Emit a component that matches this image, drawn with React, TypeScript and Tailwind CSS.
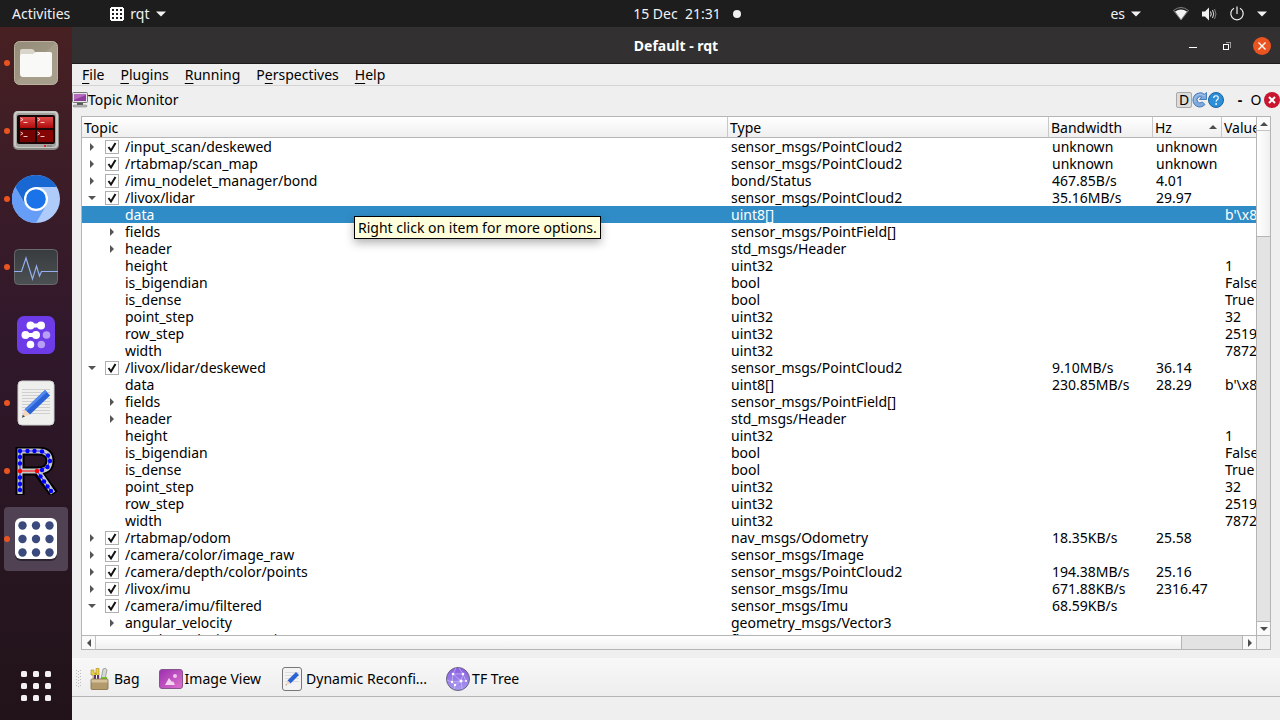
import { useState } from 'react';
import type { ReactNode } from 'react';

interface TopicRow {
  id: string;
  name: string;
  type: string;
  bandwidth?: string;
  hz?: string;
  value?: string;
  depth: 0 | 1;
  arrow?: 'open' | 'closed';
}

const POINT_CLOUD_FIELDS: Omit<TopicRow, 'id' | 'depth'>[] = [
  { name: 'fields', type: 'sensor_msgs/PointField[]', arrow: 'closed' },
  { name: 'header', type: 'std_msgs/Header', arrow: 'closed' },
  { name: 'height', type: 'uint32', value: '1' },
  { name: 'is_bigendian', type: 'bool', value: 'False' },
  { name: 'is_dense', type: 'bool', value: 'True' },
  { name: 'point_step', type: 'uint32', value: '32' },
  { name: 'row_step', type: 'uint32', value: '2519' },
  { name: 'width', type: 'uint32', value: '7872' },
];

const pointCloudRows = (topic: string): TopicRow[] =>
  POINT_CLOUD_FIELDS.map((f) => ({ ...f, id: `${topic}/${f.name}`, depth: 1 }));

const ROWS: TopicRow[] = [
  { id: 'scan', name: '/input_scan/deskewed', type: 'sensor_msgs/PointCloud2', bandwidth: 'unknown', hz: 'unknown', depth: 0, arrow: 'closed' },
  { id: 'map', name: '/rtabmap/scan_map', type: 'sensor_msgs/PointCloud2', bandwidth: 'unknown', hz: 'unknown', depth: 0, arrow: 'closed' },
  { id: 'bond', name: '/imu_nodelet_manager/bond', type: 'bond/Status', bandwidth: '467.85B/s', hz: '4.01', depth: 0, arrow: 'closed' },
  { id: 'lidar', name: '/livox/lidar', type: 'sensor_msgs/PointCloud2', bandwidth: '35.16MB/s', hz: '29.97', depth: 0, arrow: 'open' },
  { id: 'lidar/data', name: 'data', type: 'uint8[]', value: "b'\\x8", depth: 1 },
  ...pointCloudRows('lidar'),
  { id: 'deskewed', name: '/livox/lidar/deskewed', type: 'sensor_msgs/PointCloud2', bandwidth: '9.10MB/s', hz: '36.14', depth: 0, arrow: 'open' },
  { id: 'deskewed/data', name: 'data', type: 'uint8[]', bandwidth: '230.85MB/s', hz: '28.29', value: "b'\\x8", depth: 1 },
  ...pointCloudRows('deskewed'),
  { id: 'odom', name: '/rtabmap/odom', type: 'nav_msgs/Odometry', bandwidth: '18.35KB/s', hz: '25.58', depth: 0, arrow: 'closed' },
  { id: 'image', name: '/camera/color/image_raw', type: 'sensor_msgs/Image', depth: 0, arrow: 'closed' },
  { id: 'points', name: '/camera/depth/color/points', type: 'sensor_msgs/PointCloud2', bandwidth: '194.38MB/s', hz: '25.16', depth: 0, arrow: 'closed' },
  { id: 'imu', name: '/livox/imu', type: 'sensor_msgs/Imu', bandwidth: '671.88KB/s', hz: '2316.47', depth: 0, arrow: 'closed' },
  { id: 'filtered', name: '/camera/imu/filtered', type: 'sensor_msgs/Imu', bandwidth: '68.59KB/s', depth: 0, arrow: 'open' },
  { id: 'filtered/av', name: 'angular_velocity', type: 'geometry_msgs/Vector3', depth: 1, arrow: 'closed' },
  { id: 'filtered/avc', name: 'angular_velocity_covariance', type: 'float64[9]', value: '(0.0', depth: 1 },
];

function Triangle({ dir }: { dir: 'up' | 'down' | 'left' | 'right' }) {
  const d = {
    up: 'M0 6 L4 2 L8 6Z',
    down: 'M0 2 L8 2 L4 6Z',
    left: 'M6 0 L6 8 L2 4Z',
    right: 'M2 0 L6 4 L2 8Z',
  }[dir];
  return (
    <svg viewBox="0 0 8 8" className="size-2 shrink-0" fill="currentColor" aria-hidden="true">
      <path d={d} />
    </svg>
  );
}

function Caret() {
  return (
    <svg viewBox="0 0 10 6" className="w-[10px] h-[6px] shrink-0" fill="currentColor" aria-hidden="true">
      <path d="M0 0.5 H10 L5 5.5Z" />
    </svg>
  );
}

function FilesIcon() {
  return (
    <svg viewBox="0 0 48 48" className="size-12">
      <defs>
        <linearGradient id="files-bg" x1="0" y1="0" x2="1" y2="1">
          <stop offset="0" stopColor="#948b79" />
          <stop offset="0.48" stopColor="#9d9581" />
          <stop offset="0.5" stopColor="#a69e8b" />
          <stop offset="1" stopColor="#a69f8c" />
        </linearGradient>
      </defs>
      <rect x="2.500" y="2.500" width="43" height="43" rx="5" fill="url(#files-bg)" stroke="#bab29f" />
      <path d="M8 12 q0 -2 2 -2 h10 q2 0 3 3 h15 q2 0 2 2 v6 h-32z" fill="#d9d5ca" />
      <path d="M8 17 q0 -2 2 -2 h11 q2 -2 4 -2 h13 q2 0 2 2 v20 q0 3 -3 3 h-26 q-3 0 -3 -3z" fill="#f9f9f8" />
    </svg>
  );
}

function TerminatorIcon() {
  return (
    <svg viewBox="0 0 48 48" className="size-12">
      <defs>
        <linearGradient id="pane-bg" x1="0" y1="0" x2="0" y2="1">
          <stop offset="0" stopColor="#e14a4a" />
          <stop offset="1" stopColor="#ae0b0b" />
        </linearGradient>
      </defs>
      <rect x="1" y="4" width="46" height="39" rx="5" fill="#8b8b86" />
      <rect x="2" y="4" width="44" height="37" rx="4" fill="#c9c9c5" />
      <rect x="4" y="6" width="40" height="34" rx="3" fill="#a3a39f" />
      <rect x="5" y="8" width="38" height="29" rx="2" fill="#190606" />
      <rect x="8" y="10" width="15" height="11" fill="url(#pane-bg)" />
      <rect x="25" y="10" width="16" height="11" fill="url(#pane-bg)" />
      <rect x="8" y="23" width="15" height="12" fill="#730303" />
      <rect x="25" y="23" width="16" height="12" fill="#850404" />
      <g fill="none" stroke="#ffd9d9" strokeWidth="0.900">
        <path d="M8.500 11 l2.500 1.500 l-2.500 1.500 M11.500 15.500 h4" />
        <path d="M25.500 11 l2.500 1.500 l-2.500 1.500 M28.500 15.500 h4" />
        <path d="M8.500 25 l2.500 1.500 l-2.500 1.500 M11.500 29.500 h4" />
        <path d="M25.500 25 l2.500 1.500 l-2.500 1.500 M28.500 29.500 h4" />
      </g>
      <circle cx="33" cy="39" r="1.100" fill="#f20d0d" />
      <rect x="35" y="38" width="5" height="2" fill="#8a8a8a" />
    </svg>
  );
}

function ChromiumIcon() {
  return (
    <svg viewBox="0 0 48 48" className="size-12">
      <circle cx="24" cy="24" r="24" fill="#aecbfa" />
      <path d="M24 0 A24 24 0 0 1 44.800 12 H24 L13.600 30 L3.200 12 A24 24 0 0 1 24 0Z" fill="#1967d2" />
      <path d="M3.200 12 A24 24 0 0 0 24 48 L34.400 30 L24 36 L13.600 30Z" fill="#669df6" />
      <circle cx="24" cy="24" r="12" fill="#fff" />
      <circle cx="24" cy="24" r="9.800" fill="#1a73e8" />
    </svg>
  );
}

function MonitorIcon() {
  return (
    <svg viewBox="0 0 48 48" className="size-12">
      <defs>
        <linearGradient id="monitor-bg" x1="0" y1="0" x2="0" y2="1">
          <stop offset="0" stopColor="#393c3e" />
          <stop offset="1" stopColor="#4b5052" />
        </linearGradient>
      </defs>
      <rect x="2.500" y="6.500" width="43" height="35" rx="4" fill="url(#monitor-bg)" stroke="#68696a" />
      <path d="M2 28.500 H9.500 L14 15 L20.500 36 L24.500 23 L27.500 33 L29.500 28.500 H46" fill="none" stroke="#94aef0" strokeWidth="1.200" />
    </svg>
  );
}

function ExtensionIcon() {
  return (
    <svg viewBox="0 0 48 48" className="size-12">
      <rect x="5" y="5" width="38" height="38" rx="7" fill="#6d3be8" />
      <g fill="#fff">
        <circle cx="18.500" cy="14.500" r="4" />
        <circle cx="29" cy="14.500" r="4" />
        <rect x="19" y="12.500" width="10" height="4" />
        <circle cx="13.500" cy="24" r="4" />
        <circle cx="24" cy="24" r="4" />
        <rect x="14" y="22" width="10" height="4" />
        <circle cx="18.500" cy="33.500" r="3.800" />
      </g>
      <g fill="#b79ff5">
        <circle cx="34.500" cy="24" r="3.800" />
        <circle cx="29.300" cy="33.500" r="3.800" />
      </g>
    </svg>
  );
}

function EditorIcon() {
  return (
    <svg viewBox="0 0 48 48" className="size-12">
      <rect x="6" y="2" width="36" height="44" rx="4" fill="#efefee" stroke="#d0d0d0" />
      <path d="M10 10.500 H38 M10 13.500 H38 M10 16.500 H38 M10 19.500 H38 M10 22.500 H38 M10 25.500 H38 M10 28.500 H38 M10 31.500 H38 M10 34.500 H38" stroke="#cfcfcf" />
      <path d="M33 11 L38 16.500 L18 35.500 L12.500 30.500Z" fill="#2b62d6" />
      <path d="M33 11 L35 13 L14.500 32 L12.500 30.500Z" fill="#5189ee" />
      <path d="M12.500 30.500 L18 35.500 L10 38.500Z" fill="#f3d6bd" />
      <path d="M10.700 35.800 L13 37.500 L10 38.800Z" fill="#444" />
    </svg>
  );
}

function RtabmapIcon() {
  const dots = [
    [8, 4], [15.500, 4], [22.500, 4], [30, 4.500], [36, 8.500], [38, 14], [35.500, 20], [30, 23],
    [8, 10], [8, 16.500], [8, 30.500], [8, 37], [8, 43], [28.500, 29.500], [32, 34.500], [35.500, 39.500], [39, 44],
  ];
  return (
    <svg viewBox="0 0 48 48" className="size-12">
      <path d="M8 48 V4 H26 Q38 4 38 14 Q38 24 25 24 H8 M25 24 L42 47" fill="none" stroke="#000" strokeWidth="9" />
      <path d="M8 47 V4 H26 Q38 4 38 14 Q38 24 25 24 H8 M26 24 L41 46" fill="none" stroke="#c6c6c6" strokeWidth="5" />
      <path d="M8 43 V4 H30 L36 9 L38 14 L35 20 L25 24 L39 44" fill="none" stroke="#00f" strokeWidth="0.800" />
      {dots.map(([x, y]) => (
        <circle key={`${x}-${y}`} cx={x} cy={y} r="2.200" fill="#00f" />
      ))}
      <path d="M8 24 H25" stroke="#f00" />
      <circle cx="8" cy="24" r="2.200" fill="#f00" />
      <circle cx="25" cy="24" r="2.200" fill="#f00" />
    </svg>
  );
}

function RqtIcon() {
  const steps = [10.500, 24, 37.500];
  return (
    <svg viewBox="0 0 48 48" className="size-12">
      <rect x="3" y="4" width="42" height="42" rx="6" fill="#2d2530" />
      <rect x="3" y="3" width="42" height="41" rx="6" fill="#fff" />
      {steps.map((y) => steps.map((x) => <circle key={`${x}-${y}`} cx={x} cy={y} r="4.200" fill="#3b4a7c" />))}
    </svg>
  );
}

function RqtGlyph() {
  return (
    <svg viewBox="0 0 14 14" className="size-[14px]" shapeRendering="crispEdges">
      <path d="M1 0 H13 V1 H14 V13 H13 V14 H1 V13 H0 V1 H1Z" fill="#fff" />
      {[2, 6, 10].map((y) => [2, 6, 10].map((x) => <rect key={`${x}-${y}`} x={x} y={y} width="2" height="2" fill="#1d1d1d" />))}
    </svg>
  );
}

function AppsIcon() {
  const steps = [9, 21, 33];
  return (
    <svg viewBox="0 0 48 48" className="size-12">
      {steps.map((y) => steps.map((x) => <rect key={`${x}-${y}`} x={x} y={y} width="6" height="6" rx="1.500" fill="#f2f0f0" />))}
    </svg>
  );
}

const DOCK: { label: string; running: boolean; active?: boolean; icon: ReactNode }[] = [
  { label: 'Files', running: true, icon: <FilesIcon /> },
  { label: 'Terminator', running: true, icon: <TerminatorIcon /> },
  { label: 'Chromium', running: true, icon: <ChromiumIcon /> },
  { label: 'System Monitor', running: true, icon: <MonitorIcon /> },
  { label: 'Extensions', running: false, icon: <ExtensionIcon /> },
  { label: 'Text Editor', running: true, icon: <EditorIcon /> },
  { label: 'RTAB-Map', running: true, icon: <RtabmapIcon /> },
  { label: 'rqt', running: true, active: true, icon: <RqtIcon /> },
];

function TopBar() {
  return (
    <header className="h-[27px] shrink-0 bg-[#1d1d1d] text-[#f2f2f2] grid grid-cols-[1fr_auto_1fr] items-center px-3">
      <div className="flex items-center gap-10">
        <button>Activities</button>
        <button className="flex items-center gap-[6px]">
          <RqtGlyph />
          <span>rqt</span>
          <Caret />
        </button>
      </div>
      <div className="flex items-center gap-3 pl-[94px]">
        <button className="whitespace-pre">15 Dec  21:31</button>
        <span className="size-2 rounded-full bg-[#f2f2f2]" />
      </div>
      <div className="flex items-center justify-end">
        <button className="flex items-center gap-[6px] mr-8">
          <span>es</span>
          <Caret />
        </button>
        <button className="flex items-center gap-3 pr-px" aria-label="System menu">
          <svg viewBox="0 0 16 16" className="size-4">
            <path d="M0.500 4.500 Q8 -1.500 15.500 4.500 L8 14Z" fill="none" stroke="#999" strokeWidth="0.800" />
            <path d="M2 5.500 Q8 1.500 14 5.500 L8 13.500Z" fill="#f2f2f2" />
          </svg>
          <svg viewBox="0 0 16 16" className="size-4" fill="none" stroke="#f2f2f2">
            <path d="M1 5.500 H4 L8 1.500 V14.500 L4 10.500 H1Z" fill="#f2f2f2" stroke="none" />
            <path d="M9.500 5.500 Q11 8 9.500 10.500" />
            <path d="M11.500 4 Q14 8 11.500 12" strokeWidth="0.900" />
            <path d="M13.500 3 Q16.500 8 13.500 13" stroke="#999" strokeWidth="0.800" />
          </svg>
          <svg viewBox="0 0 16 16" className="size-4" fill="none" stroke="#f2f2f2" strokeWidth="1.200">
            <path d="M5 2.200 A6.200 6.200 0 1 0 11 2.200 M8 0.500 V8" />
          </svg>
          <Caret />
        </button>
      </div>
    </header>
  );
}

function Dock() {
  return (
    <nav className="w-18 shrink-0 flex flex-col gap-1 px-1 pt-1 pb-[2px] bg-linear-to-b from-[#472022] via-[#30182b] via-45% to-[#211319]">
      {DOCK.map((app) => (
        <button
          key={app.label}
          aria-label={app.label}
          className={`relative size-16 shrink-0 flex items-center justify-center rounded ${app.active ? 'bg-[#504252]' : ''}`}
        >
          {app.running && <span className="absolute left-0 top-[29px] size-[6px] rounded-full bg-[#e95420]" />}
          {app.icon}
        </button>
      ))}
      <button aria-label="Show applications" className="size-16 mt-auto flex items-center justify-center">
        <AppsIcon />
      </button>
    </nav>
  );
}

function TitleBar() {
  return (
    <div className="h-[37px] shrink-0 bg-[#333031] border-b border-[#1c1a1a] text-white grid grid-cols-[1fr_auto_1fr] items-center px-[9px] pt-px">
      <span />
      <h1 className="font-bold">Default - rqt</h1>
      <div className="flex items-center justify-end gap-[18px]">
        <button aria-label="Minimize" className="size-4 flex items-center justify-center">
          <span className="w-2 h-px bg-white mt-1" />
        </button>
        <button aria-label="Restore" className="size-4 flex items-center justify-center">
          <svg viewBox="0 0 8 8" className="size-2" fill="none" shapeRendering="crispEdges">
            <path d="M2.500 0.500 H7.500 V5.500" stroke="#999" />
            <rect x="0.500" y="2.500" width="5" height="5" stroke="#fff" />
          </svg>
        </button>
        <button aria-label="Close" className="size-[18px] rounded-full bg-[#e95420] flex items-center justify-center">
          <svg viewBox="0 0 8 8" className="size-2" stroke="#fff" strokeWidth="1.400">
            <path d="M0.500 0.500 L7.500 7.500 M7.500 0.500 L0.500 7.500" />
          </svg>
        </button>
      </div>
    </div>
  );
}

function MenuItem({ label, hot = 0 }: { label: string; hot?: number }) {
  return (
    <button>
      {label.slice(0, hot)}
      <span className="underline underline-offset-3 decoration-1">{label[hot]}</span>
      {label.slice(hot + 1)}
    </button>
  );
}

function MenuBar() {
  return (
    <div className="h-[22px] shrink-0 flex items-center gap-4 px-[10px] border-b border-[#d4d4d4]">
      <MenuItem label="File" />
      <MenuItem label="Plugins" />
      <MenuItem label="Running" />
      <MenuItem label="Perspectives" hot={1} />
      <MenuItem label="Help" />
    </div>
  );
}

function PluginHeader() {
  return (
    <div className="h-[27px] shrink-0 flex items-center">
      <svg viewBox="0 0 16 16" className="size-4">
        <rect x="0.500" y="0.500" width="15" height="10" rx="1" fill="#e5e5e5" stroke="#777" />
        <rect x="2" y="2" width="12" height="7" fill="#8f3d9c" />
        <path d="M2 2 H14 V3 L2 8Z" fill="#b56abf" />
        <rect x="5" y="11" width="6" height="2" fill="#555" />
        <rect x="1" y="13" width="14" height="2" rx="1" fill="#bbb" stroke="#777" strokeWidth="0.500" />
      </svg>
      <h2>Topic Monitor</h2>
      <div className="ml-auto flex items-center">
        <button className="size-4 flex items-center justify-center rounded-xs border border-[#a8a8a8] bg-[#dcdcdc]">D</button>
        <button aria-label="Reload" className="size-4">
          <svg viewBox="0 0 16 16" className="size-4">
            <path
              d="M8 0.800 Q10.500 0.600 12.300 2.300 L14.500 0.500 V7.500 H7.500 L9.700 5 Q7.500 4 5.800 5.700 Q4.300 7.600 5.600 9.700 Q7.500 12 10.500 10 L13 12.500 Q10.500 15.500 7 15 Q1.200 13.800 0.900 8 Q1.200 1.800 8 0.800Z"
              fill="#7ea9dc"
              stroke="#4a7dbb"
            />
            <path d="M3 10 Q1.500 4 7.500 2.300 Q10 2 12 4 L13.300 3" fill="none" stroke="#aac8ea" />
          </svg>
        </button>
        <button aria-label="Help" className="size-4">
          <svg viewBox="0 0 16 16" className="size-4">
            <circle cx="8" cy="8" r="7.500" fill="#2d8fd8" stroke="#1c6399" />
            <path d="M5.700 6 Q5.700 3.800 8 3.800 Q10.300 3.800 10.300 6 Q10.300 7.200 8.900 8 Q8.100 8.500 8.100 9.800" fill="none" stroke="#fff" strokeWidth="1.100" />
            <circle cx="8.100" cy="12" r="0.900" fill="#fff" />
          </svg>
        </button>
        <button aria-label="Minimize plugin" className="w-4 ml-2 font-bold">-</button>
        <button aria-label="Float plugin" className="w-4">O</button>
        <button aria-label="Close plugin" className="size-4 rounded-full bg-[#c9162f] flex items-center justify-center">
          <svg viewBox="0 0 8 8" className="size-2" stroke="#fff" strokeWidth="2">
            <path d="M1 1 L7 7 M7 1 L1 7" />
          </svg>
        </button>
      </div>
    </div>
  );
}

function TopicTable() {
  const [selected, setSelected] = useState('lidar/data');
  const headCell = 'font-normal text-left pl-[2px] border-b border-[#b5b5b5]';

  return (
    <div className="relative flex-1 min-w-0 overflow-hidden bg-white">
      <table className="w-full table-fixed border-separate border-spacing-0 leading-[17px] whitespace-nowrap">
        <colgroup>
          <col />
          <col className="w-[321px]" />
          <col className="w-[104px]" />
          <col className="w-[69px]" />
          <col className="w-[34px]" />
        </colgroup>
        <thead>
          <tr className="h-[21px] bg-linear-to-b from-white to-[#eeeeee]">
            <th className={`${headCell} border-r border-r-[#c8c8c8]`}>Topic</th>
            <th className={`${headCell} border-r border-r-[#c8c8c8]`}>Type</th>
            <th className={`${headCell} border-r border-r-[#c8c8c8]`}>Bandwidth</th>
            <th className={`${headCell} border-r border-r-[#c8c8c8]`} aria-sort="ascending">
              <div className="flex items-center justify-between pr-1 text-[#4d4d4d]">
                <span className="text-black">Hz</span>
                <Triangle dir="up" />
              </div>
            </th>
            <th className={`${headCell} overflow-hidden`}>Value</th>
          </tr>
        </thead>
        <tbody>
          {ROWS.map((row) => (
            <tr
              key={row.id}
              onClick={() => setSelected(row.id)}
              className={`h-[17px] ${selected === row.id ? 'bg-[#308cc6] text-white' : ''}`}
            >
              <td className="p-0">
                <div className={`h-[17px] flex items-center ${row.depth ? 'pl-[26px]' : 'pl-[6px]'}`}>
                  <span className="size-2 mr-[9px] text-[#555] flex items-center">
                    {row.arrow && (
                      <button aria-label={`Toggle ${row.name}`} className="flex">
                        <Triangle dir={row.arrow === 'open' ? 'down' : 'right'} />
                      </button>
                    )}
                  </span>
                  {row.depth === 0 && (
                    <span className="relative size-[14px] mr-[6px]">
                      <input
                        id={row.id}
                        type="checkbox"
                        defaultChecked
                        className="peer block size-[14px] appearance-none border border-[#b0b0b0] bg-white"
                      />
                      <svg
                        viewBox="0 0 14 14"
                        className="absolute inset-0 size-[14px] pointer-events-none hidden peer-checked:block"
                        fill="none"
                        stroke="#111"
                        strokeWidth="2"
                      >
                        <path d="M3.500 7 L6 10.500 L10.500 3" />
                      </svg>
                    </span>
                  )}
                  {row.depth === 0 ? <label htmlFor={row.id}>{row.name}</label> : <span>{row.name}</span>}
                </div>
              </td>
              <td className="p-0 pl-[3px]">{row.type}</td>
              <td className="p-0 pl-[3px]">{row.bandwidth}</td>
              <td className="p-0 pl-[3px]">{row.hz}</td>
              <td className="p-0 pl-[3px] overflow-hidden">{row.value}</td>
            </tr>
          ))}
        </tbody>
      </table>
      <div
        role="tooltip"
        className="absolute left-[272px] top-[99px] border border-black bg-[#ffffdc] px-[3px] py-[2px] leading-[17px] whitespace-nowrap shadow-[0_4px_10px_rgba(0,0,0,0.3)]"
      >
        Right click on item for more options.
      </div>
    </div>
  );
}

function VerticalScrollbar() {
  const btn = 'h-[14px] shrink-0 flex items-center justify-center bg-[#fafafa]';
  return (
    <div className="w-[14px] shrink-0 flex flex-col border-l border-[#b5b5b5] bg-[#e3e3e3] text-[#4d4d4d]">
      <button aria-label="Scroll up" className={`${btn} border-b border-[#c4c4c4]`}>
        <Triangle dir="up" />
      </button>
      <div className="h-[20.400%] bg-linear-to-r from-white to-[#f0f0f0] border-b border-[#b5b5b5]" />
      <button aria-label="Scroll down" className={`${btn} mt-auto border-t border-[#b5b5b5]`}>
        <Triangle dir="down" />
      </button>
    </div>
  );
}

function HorizontalScrollbar() {
  const btn = 'w-[14px] shrink-0 flex items-center justify-center bg-[#fafafa]';
  return (
    <div className="h-[14px] shrink-0 flex border-t border-[#b5b5b5] bg-[#e3e3e3] text-[#4d4d4d]">
      <button aria-label="Scroll left" className={`${btn} border-r border-[#c4c4c4]`}>
        <Triangle dir="left" />
      </button>
      <div className="w-[91.400%] bg-linear-to-b from-white to-[#f0f0f0] border-r border-[#b5b5b5]" />
      <button aria-label="Scroll right" className={`${btn} ml-auto border-l border-[#b5b5b5]`}>
        <Triangle dir="right" />
      </button>
      <div className="w-[14px] shrink-0 border-l border-[#b5b5b5] bg-[#efefef]" />
    </div>
  );
}

function BagIcon() {
  return (
    <svg viewBox="0 0 24 24" className="size-6">
      <path d="M3 3 h3 v3 h2 v6 h-3 v-4 h-2z M8 1.500 h3 v10 h-3z" fill="#ecd04a" stroke="#a88a16" strokeWidth="0.600" />
      <path d="M15 2 q3 -2 4 1 l-2 9 h-4z" fill="#d5d8d5" stroke="#858985" strokeWidth="0.700" />
      <path d="M6 8 h5 v4 h-5z" fill="#5c3566" />
      <path d="M8 8 h1 v4 h-1z" fill="#fff" />
      <path d="M13 10 h6 v2 h-6z" fill="#73c32b" />
      <rect x="3" y="12" width="17" height="10.500" rx="1" fill="#b39a6c" stroke="#826c43" strokeWidth="0.800" />
      <rect x="3.500" y="12.500" width="16" height="3" fill="#d5c19a" />
    </svg>
  );
}

function ImageIcon() {
  return (
    <svg viewBox="0 0 24 24" className="size-6">
      <defs>
        <linearGradient id="picture-bg" x1="0" y1="0" x2="1" y2="1">
          <stop offset="0" stopColor="#9c2fb0" />
          <stop offset="1" stopColor="#df72cc" />
        </linearGradient>
      </defs>
      <rect x="0.500" y="2.500" width="23" height="19" rx="2.500" fill="url(#picture-bg)" stroke="#85548b" />
      <path d="M6 18 L10 11 L13 15 L14 14 L16 18Z" fill="#f3d2f2" />
      <circle cx="16" cy="9" r="2" fill="#f0c4ee" />
    </svg>
  );
}

function NoteIcon() {
  return (
    <svg viewBox="0 0 24 24" className="size-6">
      <rect x="2.500" y="0.500" width="19" height="23" rx="2.500" fill="#f3f3f3" stroke="#777" />
      <path d="M5 5.500 H19 M5 8.500 H19 M5 11.500 H19 M5 14.500 H19" stroke="#dcdcdc" />
      <path d="M16 5 L19 8 L10.500 16.500 L7.500 13.500Z" fill="#2b62d6" />
      <path d="M7.500 13.500 L10.500 16.500 L6 18Z" fill="#f3d6bd" />
      <path d="M5 18 L6.500 17 L7 18.500Z" fill="#b98b65" />
    </svg>
  );
}

function TreeIcon() {
  return (
    <svg viewBox="0 0 24 24" className="size-6">
      <defs>
        <linearGradient id="tree-bg" x1="0" y1="0" x2="0" y2="1">
          <stop offset="0" stopColor="#8a5be0" />
          <stop offset="1" stopColor="#a79af0" />
        </linearGradient>
      </defs>
      <circle cx="12" cy="12" r="11.500" fill="url(#tree-bg)" stroke="#6b6580" />
      <path d="M7 7 L17 7 L20 14 L15 14 L7 7 L6 15 L9 18 L15 14 L17 7 M6 15 L15 14 L16 22 M9 18 L8 22 M7 7 L10 1 M17 7 L13 1 M6 15 L1 13" fill="none" stroke="#c9bdf5" strokeWidth="0.700" />
      <g fill="#fff">
        <circle cx="7" cy="7" r="1.300" />
        <circle cx="17" cy="7" r="1.300" />
        <circle cx="15" cy="14" r="1.500" />
        <circle cx="6" cy="15" r="1.200" />
        <circle cx="9" cy="18" r="1.200" />
        <circle cx="20" cy="14" r="1" />
      </g>
    </svg>
  );
}

function PluginToolbar() {
  return (
    <div className="h-[39px] shrink-0 flex items-center pl-1 pt-1 bg-linear-to-b from-[#f8f8f8] to-[#eeeeee] border-b border-[#b5b5b5]">
      <svg viewBox="0 0 5 18" className="w-[5px] h-[18px] mr-[7px]" stroke="#bdbdbd" strokeDasharray="1 2" aria-hidden="true">
        <path d="M0.500 0 V18 M4.500 0 V18 M2.500 1 V18" />
      </svg>
      <div className="flex items-center gap-[19px]">
        <button className="flex items-center gap-[2px]"><BagIcon />Bag</button>
        <button className="flex items-center gap-[2px]"><ImageIcon />Image View</button>
        <button className="flex items-center gap-[2px]"><NoteIcon />Dynamic Reconfi...</button>
        <button className="flex items-center gap-[2px]"><TreeIcon />TF Tree</button>
      </div>
    </div>
  );
}

export default function App() {
  return (
    <div className="h-screen flex flex-col overflow-hidden text-[14px] leading-[20px] font-['Noto_Sans',sans-serif] text-black">
      <TopBar />
      <div className="flex-1 min-h-0 flex">
        <Dock />
        <main className="flex-1 min-w-0 flex flex-col bg-[#efefef]">
          <TitleBar />
          <MenuBar />
          <PluginHeader />
          <section className="flex-1 min-h-0 flex flex-col mt-[3px] mb-2 mx-[9px] border border-[#b5b5b5]">
            <div className="flex-1 min-h-0 flex">
              <TopicTable />
              <VerticalScrollbar />
            </div>
            <HorizontalScrollbar />
          </section>
          <PluginToolbar />
          <footer className="h-[23px] shrink-0 bg-[#efefef]" />
        </main>
      </div>
    </div>
  );
}
